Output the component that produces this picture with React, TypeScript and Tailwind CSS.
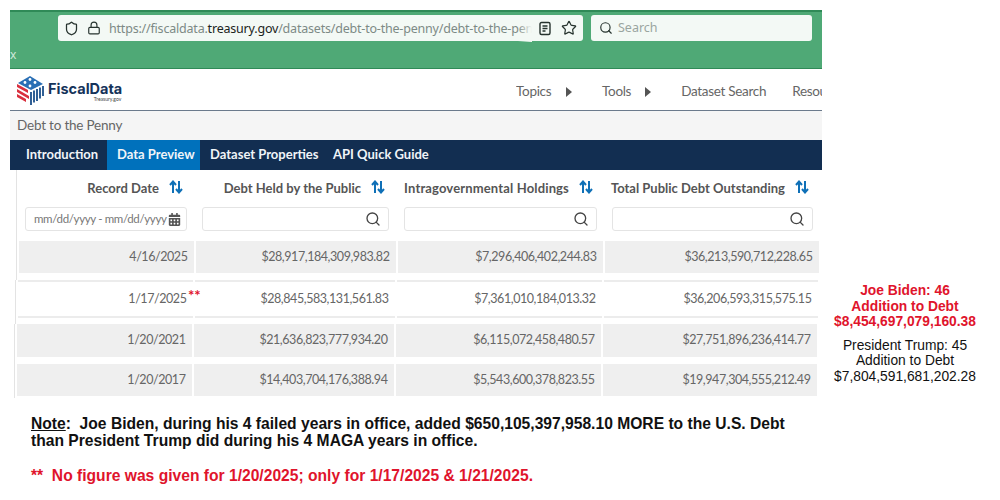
import React from 'react';
import { Search, Lock, Shield, Star } from 'lucide-react';
import { FaCalendarAlt } from 'react-icons/fa';

const SortIcon = () => (
  <svg width="14" height="14" viewBox="0 0 14 14" className="text-[#0f70b7] shrink-0">
    <path d="M4 13V2M1 5l3-3.5L7 5" fill="none" stroke="currentColor" strokeWidth="2" />
    <path d="M10 1v11M7 9l3 3.5L13 9" fill="none" stroke="currentColor" strokeWidth="2" />
  </svg>
);

const Reader = () => (
  <svg width="14" height="15" viewBox="0 0 14 15" fill="none" stroke="#26332e" strokeWidth="1.4">
    <rect x="2" y="1.5" width="10" height="12" rx="1.5" />
    <path d="M4.5 5h5M4.5 7.5h5M4.5 10h3" />
  </svg>
);

const Logo = () => (
  <svg width="28" height="30" viewBox="1 0 28 30" className="shrink-0">
    <path d="M14 1 27 9 15 15 2 8Z" fill="#2a6fb5" />
    <circle cx="14" cy="4.500" r="1.400" fill="#fff" />
    <circle cx="9" cy="7.500" r="1.400" fill="#fff" />
    <circle cx="19" cy="7.500" r="1.400" fill="#fff" />
    <circle cx="14" cy="11" r="1.400" fill="#fff" />
    <path d="M1 9l11 6v3L1 12ZM1 14l12 7v3L1 17ZM1 19l9 5v3l-9-5Z" fill="#d9303e" />
    <path d="M15 17v13M18 15.500v12M21 14v12M24 12.500v11M27 11v10" stroke="#1b4f8a" strokeWidth="1.800" />
  </svg>
);

const Triangle = () => <span className="block w-0 h-0 border-y-[5px] border-y-transparent border-l-[6px] border-l-[#555]" />;

const rows = [
  { date: '4/16/2025', a: '$28,917,184,309,983.82', b: '$7,296,406,402,244.83', c: '$36,213,590,712,228.65', wrap: 'ml-0 h-[39px]', row: 'h-[32px] bg-[#efefef]' },
  { date: '1/17/2025', a: '$28,845,583,131,561.83', b: '$7,361,010,184,013.32', c: '$36,206,593,315,575.15', wrap: '-ml-[1px] h-[44px]', row: 'h-[38px] bg-white border-y-2 border-[#ececec]', mark: true },
  { date: '1/20/2021', a: '$21,636,823,777,934.20', b: '$6,115,072,458,480.57', c: '$27,751,896,236,414.77', wrap: '-ml-[2px] h-[40px]', row: 'h-[33px] bg-[#efefef]' },
  { date: '1/20/2017', a: '$14,403,704,176,388.94', b: '$5,543,600,378,823.55', c: '$19,947,304,555,212.49', wrap: '-ml-[2px] h-[34px]', row: 'h-[32px] bg-[#efefef]' },
];

const gridCols = 'grid grid-cols-[175px_200px_205px_214px] gap-x-[2px]';

const FilterBox = () => (
  <div className="h-[24px] border border-[#e4e4e4] rounded-[3px] bg-white flex items-center justify-end pr-[7px]">
    <Search size={16} strokeWidth={2} color="#444" />
  </div>
);

export default function App() {
  return (
    <div className="w-[1000px] h-[500px] bg-white overflow-hidden flex font-['Liberation_Sans',sans-serif]">
      <div className="w-[822px] shrink-0 pt-[10px] pl-[10px] flex flex-col">
        {/* browser bar */}
        <div className="h-[59px] bg-[#4fa976] border-t-2 border-b border-[#2f8a57] relative font-['Noto_Sans',sans-serif]">
          <div className="flex gap-[8px] pl-[48px] pt-[3px]">
            <div className="w-[525px] h-[26px] bg-[#f3f9f5] rounded-[3px] flex items-center pl-[6px] pr-[5px]">
              <Shield size={15} color="#26332e" strokeWidth={2} className="shrink-0" />
              <Lock size={14} color="#26332e" strokeWidth={2} className="ml-[8px] shrink-0" />
              <div className="relative ml-[8px] flex-1 min-w-0 text-[12.500px] tracking-[-0.2px] leading-[26px] pt-[1px] text-[#7d8a85] whitespace-nowrap overflow-hidden">
                https://fiscaldata.<span className="text-[#1b2421]">treasury.gov</span>/datasets/debt-to-the-penny/debt-to-the-penny
                <span className="absolute right-0 top-0 h-full w-[14px] bg-gradient-to-r from-transparent to-[#f3f9f5]" />
              </div>
              <div className="ml-[6px] flex items-center gap-[9px] pr-[1px]">
                <Reader />
                <Star size={16} color="#26332e" strokeWidth={1.800} />
              </div>
            </div>
            <div className="w-[221px] h-[26px] bg-[#f3f9f5] rounded-[3px] flex items-center pl-[8px] gap-[5px]">
              <Search size={14} color="#26332e" strokeWidth={2} />
              <span className="text-[12.500px] text-[#9aa5a0]">Search</span>
            </div>
          </div>
          <span className="absolute left-0 bottom-[7px] text-[12px] leading-none text-[#cfe8da]">x</span>
        </div>
        {/* site header */}
        <div className="h-[42px] bg-white border-b border-[#6b7a8c] flex items-center pl-[7px] font-['Lato',sans-serif] overflow-hidden">
          <Logo />
          <div className="ml-[3px] flex flex-col items-end mt-[3px]">
            <span className="text-[14.500px] font-bold leading-[16px] text-[#15335a] font-['Inter',sans-serif]">FiscalData</span>
            <span className="text-[5px] leading-[5px] text-[#444] pr-[1px]">Treasury.gov</span>
          </div>
          <div className="ml-auto mt-[4px] flex items-center text-[13.500px] tracking-[-0.3px] text-[#666] whitespace-nowrap w-[306px] shrink-0 overflow-hidden">
            <span className="w-[35px]">Topics</span>
            <span className="ml-[15px]"><Triangle /></span>
            <span className="ml-[30px] w-[30px]">Tools</span>
            <span className="ml-[14px]"><Triangle /></span>
            <span className="ml-[30px] w-[81px]">Dataset Search</span>
            <span className="ml-[30px]">Resources</span>
          </div>
        </div>
        <div className="h-[29px] bg-[#f5f5f5] flex items-center pl-[7px] text-[13.500px] tracking-[-0.2px] text-[#666] font-['Lato',sans-serif]">Debt to the Penny</div>
        {/* tabs */}
        <div className="h-[30px] bg-[#122e51] flex text-[13px] font-bold text-[#f0f4f8] font-['Lato',sans-serif]">
          <div className="px-[16px] flex items-center w-[97px] whitespace-nowrap">Introduction</div>
          <div className="px-[10px] flex items-center w-[93px] bg-[#0071bc] whitespace-nowrap">Data Preview</div>
          <div className="pl-[10px] flex items-center w-[133px] whitespace-nowrap">Dataset Properties</div>
          <div className="flex items-center whitespace-nowrap">API Quick Guide</div>
        </div>
        {/* table */}
        <div className="ml-[6px] font-['Lato',sans-serif] text-[12.500px] tracking-[-0.430px] text-[#666]">
          <div className="border-l border-[#e3e3e3] pl-[2px]">
            <div className={`${gridCols} pt-[10px] h-[37px] font-bold text-[#555] text-[13px] tracking-normal leading-[17px] whitespace-nowrap`}>
              <div className="flex justify-end gap-[10px] pr-[11px]">Record Date <SortIcon /></div>
              <div className="flex justify-end gap-[10px] pr-[11px]">Debt Held by the Public <SortIcon /></div>
              <div className="flex justify-end gap-[10px] pr-[10px]"><span className="tracking-[0.15px]">Intragovernmental Holdings</span> <SortIcon /></div>
              <div className="flex justify-end gap-[10px] pr-[10px]">Total Public Debt Outstanding <SortIcon /></div>
            </div>
            <div className={`${gridCols} h-[34px]`}>
              <div className="pl-[6px] pr-[7px]">
                <div className="h-[24px] border border-[#e4e4e4] rounded-[3px] flex items-center pl-[8px] pr-[5px] justify-between text-[11.500px] tracking-[-0.350px] text-[#777] whitespace-nowrap">
                  mm/dd/yyyy - mm/dd/yyyy
                  <FaCalendarAlt size={13} color="#555" className="shrink-0" />
                </div>
              </div>
              <div className="pl-[6px] pr-[7px]"><FilterBox /></div>
              <div className="pl-[6px] pr-[6px]"><FilterBox /></div>
              <div className="pl-[7px] pr-[6px]"><FilterBox /></div>
            </div>
          </div>
          {rows.map(r => (
            <div key={r.date} className={`border-l border-[#e3e3e3] pl-[2px] ${r.wrap}`}>
              <div className={gridCols}>
                {[r.date, r.a, r.b, r.c].map((v, i) => (
                  <div key={v} className={`flex items-center justify-end pr-[6.500px] relative ${r.row}`}>
                    {v}
                    {i === 0 && r.mark && (
                      <span className="absolute z-10 left-[170px] top-[6px] text-[#e0142c] font-bold text-[15px] tracking-normal leading-[15px] whitespace-nowrap">**</span>
                    )}
                  </div>
                ))}
              </div>
            </div>
          ))}
        </div>
        {/* notes */}
        <div className="pl-[21px] pt-[17px] font-bold text-[15.630px] leading-[17.300px] text-[#111] whitespace-nowrap">
          <p><span className="underline">Note</span>:&nbsp; Joe Biden, during his 4 failed years in office, added $650,105,397,958.10 MORE to the U.S. Debt</p>
          <p>than President Trump did during his 4 MAGA years in office.</p>
          <p className="mt-[17.300px] text-[#e0142c]">**&nbsp; No figure was given for 1/20/2025; only for 1/17/2025 &amp; 1/21/2025.</p>
        </div>
      </div>
      {/* totals */}
      <div className="flex-1 pt-[283px] pr-[12px] text-center text-[13.800px] leading-[15.500px] whitespace-nowrap">
        <div className="font-bold text-[#e0142c]">
          <p>Joe Biden: 46</p>
          <p>Addition to Debt</p>
          <p>$8,454,697,079,160.38</p>
        </div>
        <div className="mt-[8px] text-[#111]">
          <p>President Trump: 45</p>
          <p>Addition to Debt</p>
          <p>$7,804,591,681,202.28</p>
        </div>
      </div>
    </div>
  );
}
